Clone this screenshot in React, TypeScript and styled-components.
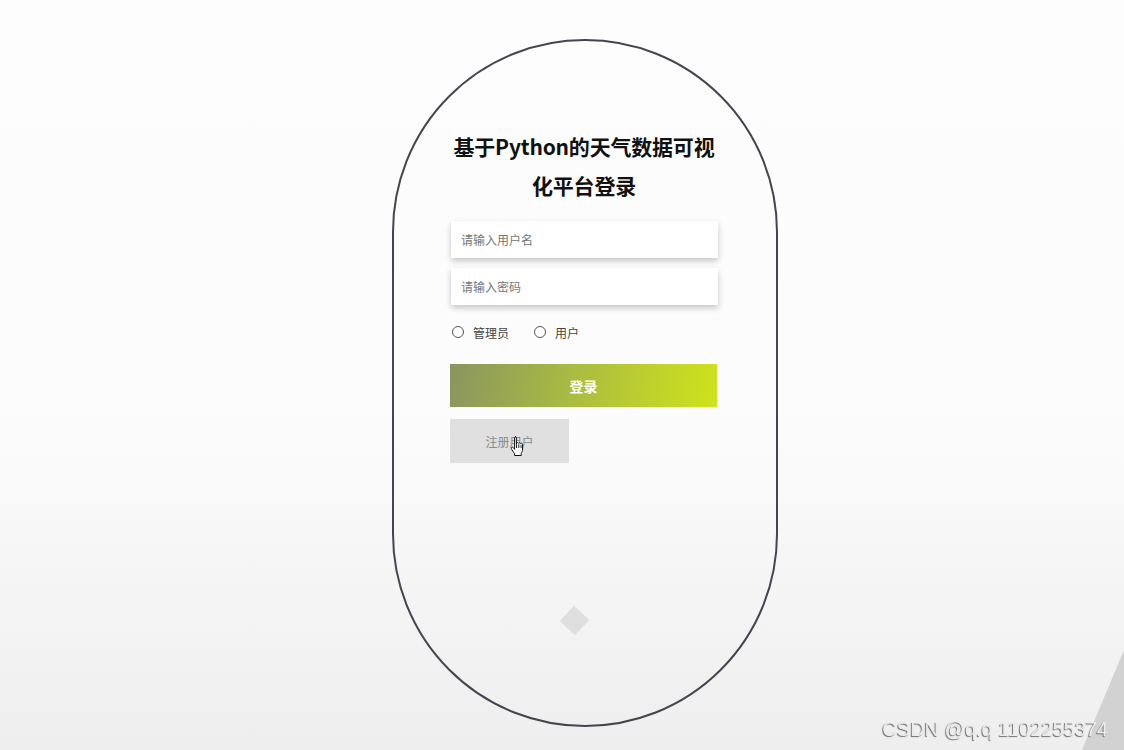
import styled, { createGlobalStyle } from "styled-components";

const GlobalStyle = createGlobalStyle`
  html, body {
    margin: 0;
    padding: 0;
  }
  body {
    font-family: "Noto Sans CJK SC", "Noto Sans", sans-serif;
    background: linear-gradient(180deg, #fdfdfd 0%, #fcfcfc 55%, #eeeeee 100%);
    min-height: 100vh;
    overflow: hidden;
  }
`;

const HandCursor = () => (
  <svg width="16" height="22" viewBox="0 0 16 22">
    <path
      d="M5 1.5c.8 0 1.4.6 1.4 1.4V9l.2-1c.5-.5 1.6-.5 2 .3.4-.6 1.6-.7 2 .2.5-.5 1.8-.3 2 .7v4.8c0 2-.6 3.2-1.4 4.4v2.1H4.6v-2c-1-1-2.2-2.7-3-4.2-.5-.9-.4-1.7.3-2 .7-.3 1.4.2 1.9.9l.8 1.1V2.9c0-.8.6-1.4 1.4-1.4z"
      fill="#fff"
      stroke="#111"
      strokeWidth="1"
      strokeLinejoin="round"
    />
    <path d="M6.5 9v4M8.8 9.3v3.7M11.1 9.8v3.2" stroke="#111" strokeWidth="0.9" />
  </svg>
);

const App = () => {
  return (
    <>
      <GlobalStyle />
      <Page>
        <Pill>
          <Form>
            <Title>基于Python的天气数据可视化平台登录</Title>
            <Input placeholder="请输入用户名" />
            <Input placeholder="请输入密码" type="password" />
            <RadioRow>
              <RadioLabel>
                <Radio type="radio" name="role" />
                管理员
              </RadioLabel>
              <RadioLabel>
                <Radio type="radio" name="role" />
                用户
              </RadioLabel>
            </RadioRow>
            <LoginButton>登录</LoginButton>
            <RegisterButton>
              注册用户
              <Cursor>
                <HandCursor />
              </Cursor>
            </RegisterButton>
          </Form>
          <Diamond />
        </Pill>
      </Page>
      <Corner />
      <Watermark>CSDN @q.q 1102255374</Watermark>
    </>
  );
};
export default App;

const Page = styled.div`
  display: flex;
  padding: 39px 0 0 392px;
  height: 750px;
  box-sizing: border-box;
`;

const Pill = styled.div`
  width: 386px;
  height: 688px;
  box-sizing: border-box;
  border: 2px solid #46444f;
  border-radius: 193px;
  display: flex;
  flex-direction: column;
  align-items: center;
  padding-top: 86px;
`;

const Form = styled.div`
  width: 268px;
  margin-right: 2px;
  display: flex;
  flex-direction: column;
`;

const Title = styled.h1`
  margin: 0 0 17px;
  font-size: 21px;
  font-weight: 700;
  line-height: 38.5px;
  text-align: center;
  color: #111;
  letter-spacing: -0.2px;
`;

const Input = styled.input`
  height: 37px;
  margin: 0 0 10px 1px;
  padding: 0 10px;
  border: none;
  outline: none;
  background: #fff;
  box-shadow: 0 3px 6px rgba(0, 0, 0, 0.22);
  font-family: "Noto Sans CJK SC", sans-serif;
  font-size: 12px;
  color: #333;
  &::placeholder {
    color: #777;
  }
`;

const RadioRow = styled.div`
  display: flex;
  gap: 23px;
  margin: 9px 0 24px;
  height: 16px;
  align-items: center;
`;

const RadioLabel = styled.label`
  display: flex;
  align-items: center;
  gap: 9px;
  font-size: 12px;
  color: #444;
`;

const Radio = styled.input`
  appearance: none;
  margin: 0 0 0 2px;
  width: 12px;
  height: 12px;
  border: 1px solid #555;
  border-radius: 50%;
  background: #fff;
`;

const LoginButton = styled.button`
  height: 43px;
  border: none;
  background: linear-gradient(100deg, #8a955f 0%, #a9bb42 45%, #cfe31b 100%);
  color: #fff;
  font-family: "Noto Sans CJK SC", sans-serif;
  font-size: 14px;
  font-weight: 700;
  margin-bottom: 12px;
  width: 267px;
`;

const RegisterButton = styled.button`
  position: relative;
  width: 119px;
  height: 44px;
  border: none;
  background: #e0e0e0;
  color: #8a8a8a;
  font-family: "Noto Sans CJK SC", sans-serif;
  font-size: 12px;
`;

const Cursor = styled.span`
  position: absolute;
  left: 60px;
  top: 16px;
  line-height: 0;
`;

const Diamond = styled.div`
  width: 21px;
  height: 21px;
  background: #dedede;
  transform: rotate(43deg);
  margin-top: 147px;
  margin-left: -22px;
`;

const Corner = styled.div`
  position: fixed;
  right: 0;
  bottom: 0;
  width: 42px;
  height: 100px;
  background: #d2d2d2;
  clip-path: polygon(100% 0, 100% 100%, 0 100%);
`;

const Watermark = styled.div`
  position: fixed;
  right: 16px;
  bottom: 9px;
  font-family: "Liberation Sans", Arial, sans-serif;
  font-size: 20px;
  color: #ececec;
  text-shadow: -1px 1px 1px #6e6e6e;
`;
